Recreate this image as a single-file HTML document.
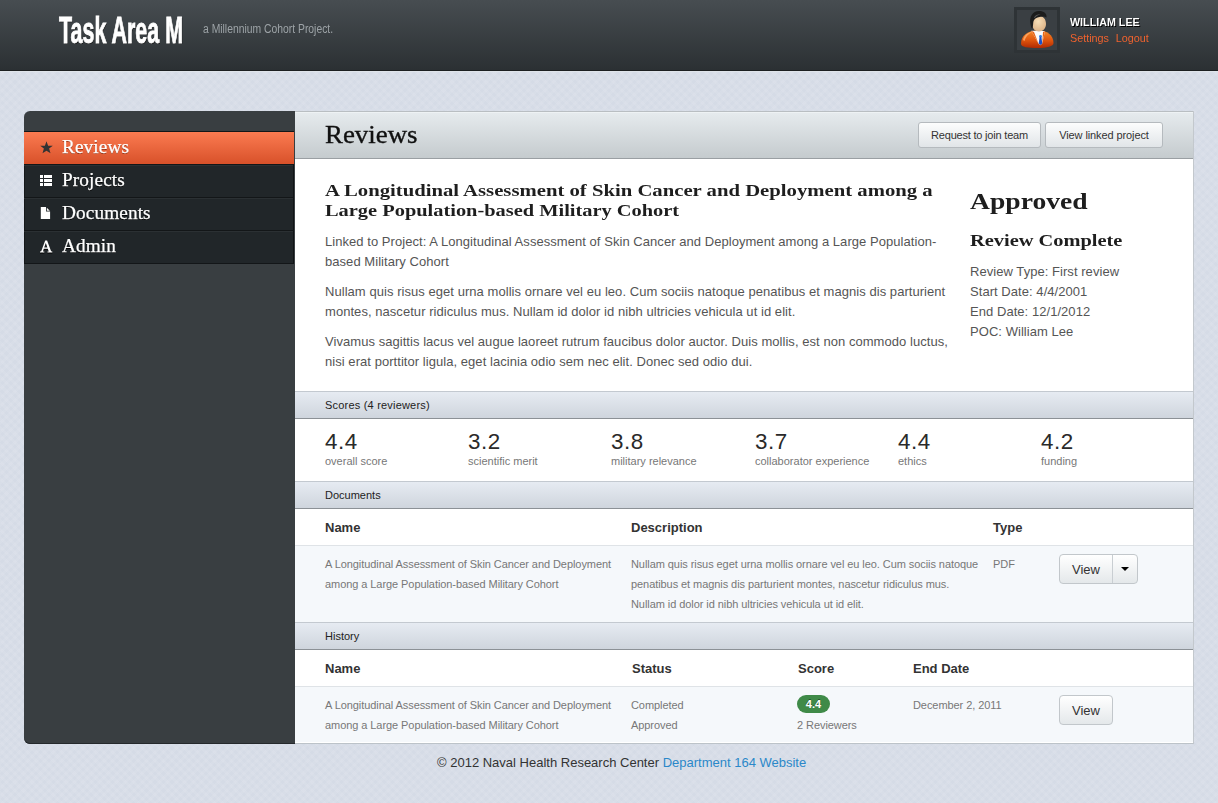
<!DOCTYPE html>
<html><head><meta charset="utf-8">
<style>
*{margin:0;padding:0;box-sizing:border-box}
html,body{width:1218px;height:803px;overflow:hidden}
body{font-family:"Liberation Sans",sans-serif;background-color:#d5dbe6;
background-image:repeating-linear-gradient(45deg,rgba(255,255,255,.07) 0 3px,rgba(255,255,255,0) 3px 6px),repeating-linear-gradient(-45deg,rgba(255,255,255,.07) 0 3px,rgba(255,255,255,0) 3px 6px);
position:relative}
.a{position:absolute;white-space:nowrap}
#hdr{left:0;top:0;width:1218px;height:71px;background:linear-gradient(#474d51,#2b3033);border-bottom:1px solid #1c1f21;box-shadow:0 1px 0 #dfe4ea}
#logo{left:59px;top:9px;font:bold 37px/44px "Liberation Sans",sans-serif;color:#fff;transform-origin:0 0;transform:scaleX(.58);-webkit-text-stroke:.9px #fff;text-shadow:1px 1px 0 #111}
#tag{left:203px;top:22px;font-size:12px;line-height:14px;color:#9da3a7;transform-origin:0 0;transform:scaleX(.863)}
#avatar{left:1014px;top:7px;width:46px;height:46px;background:#3a3f43;border:3px solid #2e3336}
#uname{left:1070px;top:15px;font:bold 11px/14px "Liberation Sans",sans-serif;color:#fff;text-shadow:1px 1px 0 #000;transform-origin:0 0;transform:scaleX(.975)}
#ulinks{left:1070px;top:31px;font-size:11px;line-height:14px;color:#f0622e;transform-origin:0 0;transform:scaleX(.98)}
#side{left:24px;top:111px;width:271px;height:633px;background:#393e41;border-radius:6px 0 0 6px;overflow:hidden;box-shadow:inset 0 -1px 0 #25292c}
.nav{position:absolute;left:0;width:270px;height:33px;background:#212629;border-top:1px solid #131618;border-right:1px solid #101315;box-shadow:inset 0 1px 0 #2b3033,inset 1px 0 0 #15181a;color:#fff;font:18px/31px "Liberation Serif",serif;letter-spacing:.1px;padding-left:38px;text-shadow:0 1px 0 #000}
.nav .ic{position:absolute;left:16px;top:10px;width:12px;height:12px}
.nt{display:inline-block;transform-origin:0 0;transform:scaleX(1.07);-webkit-text-stroke:.25px #fff}
.nav.on{border-right:0;background:linear-gradient(#fb7b51,#d8512a);box-shadow:none;text-shadow:0 1px 0 #8a3318}
#main{left:295px;top:111px;width:899px;height:633px;background:#fff;border-right:1px solid #c3c8cd;border-bottom:1px solid #bcc3c9;overflow:hidden}
#ph{left:0;top:0;width:898px;height:48px;background:linear-gradient(#e6ebee,#c5cbce);border-top:1px solid #b9bec2;border-bottom:1px solid #9a9fa3;box-shadow:inset 0 1px 0 #eef2f4}
.btn{position:absolute;height:26px;border:1px solid #b5babe;border-radius:3px;background:linear-gradient(#fcfdfd,#e1e5e8);font-size:11px;line-height:24px;color:#333;text-align:center;letter-spacing:-.1px}
.slab{font-family:"Liberation Serif",serif;font-weight:bold;color:#1e1e1e;transform-origin:0 0;transform:scaleX(1.2)}
.p{font-size:13px;line-height:20px;color:#555;letter-spacing:.05px}
.bar{position:absolute;left:0;width:898px;height:28px;background:linear-gradient(#e6ebf2,#cfd5dd);border-top:1px solid #c3c9d0;border-bottom:1px solid #8c9196;font-size:11px;line-height:26px;color:#222;padding-left:30px}
.sn{font:22.4px/24px "Liberation Sans",sans-serif;color:#2a2a2a;letter-spacing:.5px}
.sl{font-size:11px;line-height:14px;color:#777;margin-top:0}
.th{font:bold 13px/16px "Liberation Sans",sans-serif;color:#333}
.td{font-size:11px;line-height:20px;color:#777;letter-spacing:-.07px}
.row{position:absolute;left:0;width:898px;background:#f5f8fb;border-top:1px solid #dfe3e7}
.vbtn{position:absolute;height:30px;border:1px solid #c2c7cb;border-radius:4px;background:linear-gradient(#ffffff,#e4e8ea);font-size:13px;line-height:30px;color:#333}
#foot{left:437px;top:755px;font-size:13px;line-height:16px;color:#333}
#foot span{color:#2b88c9}
</style></head><body>
<div id="hdr" class="a"></div>
<div id="logo" class="a">Task Area M</div>
<div id="tag" class="a">a Millennium Cohort Project.</div>
<div id="avatar" class="a">
<svg width="40" height="40" viewBox="0 0 40 40" style="position:absolute;left:0;top:0">
<defs><linearGradient id="og" x1="0" y1="0" x2="0" y2="1"><stop offset="0" stop-color="#f58a2a"/><stop offset=".55" stop-color="#e0560e"/><stop offset="1" stop-color="#b02a02"/></linearGradient>
<radialGradient id="sk" cx=".45" cy=".35" r=".7"><stop offset="0" stop-color="#f8dfb8"/><stop offset="1" stop-color="#dcb083"/></radialGradient></defs>
<path d="M4 34 C4 25 11 20.5 21 20.5 C30 20.5 36.5 25 36.5 33 C36.5 36.5 30 38 20.5 38 C11 38 4 37 4 34 Z" fill="url(#og)"/>
<path d="M6 30 C7 25 11 22.5 15 22 C11 24 8.5 27 7.5 31 Z" fill="#ffb070" opacity=".8"/>
<path d="M14.3 20.8 L28 21 L25.2 33.5 L23.5 35.2 L21.5 33.5 Z" fill="#fbfbfb"/>
<path d="M14.3 20.8 L21.5 33.5 L17 22 Z M28 21 L25.2 33.5 L26 22 Z" fill="#e8661a"/>
<circle cx="23.5" cy="26.3" r="1.4" fill="#2a7ae0"/>
<path d="M22.6 27 L24.4 27 L25.3 33.5 L23.5 35 L21.7 33.5 Z" fill="#1a50c8"/>
<path d="M15 14 C14.5 8 17.5 6 21.5 6 C26.5 6 29 9 29 14 C29 18.5 26 21.5 22 21.5 C18 21.5 15.3 18.5 15 14 Z" fill="url(#sk)"/>
<path d="M13.5 14 C12 7 15.5 1 22 1 C27 1 30 3.5 29.5 7.5 C27.5 6 24 6.5 20.5 7.5 C18 8.2 16.3 10 16.2 13 C16.1 16 15.5 19 15 18.5 C14.2 17.5 13.8 16 13.5 14 Z" fill="#1c1c1c"/>
<path d="M17 7.5 C18.5 5 21 4 23.5 4.2 C21 5 19 6 17.8 8 Z" fill="#777" opacity=".7"/>
</svg></div>
<div id="uname" class="a">WILLIAM LEE</div>
<div id="ulinks" class="a">Settings<span style="display:inline-block;width:7px"></span>Logout</div>

<div id="side" class="a">
  <div class="nav on" style="top:20px"><svg class="ic" viewBox="0 0 12 12" style="left:16px;top:9px;width:13px;height:13px"><path d="M6 0.3 L7.5 4.3 L11.8 4.4 L8.4 7 L9.7 11.4 L6 8.9 L2.3 11.4 L3.6 7 L0.2 4.4 L4.5 4.3 Z" fill="#333"/></svg><span class="nt">Reviews</span></div>
  <div class="nav" style="top:53px"><svg class="ic" viewBox="0 0 12 12" style="top:10px"><g fill="#fff"><rect x="0" y="0" width="3" height="3"/><rect x="4" y="0" width="8" height="3"/><rect x="0" y="4" width="3" height="3"/><rect x="4" y="4" width="8" height="3"/><rect x="0" y="8" width="3" height="3"/><rect x="4" y="8" width="8" height="3"/></g></svg><span class="nt">Projects</span></div>
  <div class="nav" style="top:86px"><svg class="ic" viewBox="0 0 12 12" style="top:9px"><path d="M0.8 0 H6 V4.6 H10.1 V12 H0.8 Z" fill="#fff"/><path d="M6.8 0.8 L6.8 3.8 L9.8 3.8 Z" fill="#fff"/></svg><span class="nt">Documents</span></div>
  <div class="nav" style="top:119px;height:34px;border-bottom:1px solid #131618"><svg viewBox="0 0 13 13" style="position:absolute;left:16px;top:8.6px;width:13px;height:13px;filter:drop-shadow(0 1px 0 #000)"><path fill-rule="evenodd" fill="#fff" d="M5.2 0.6 L7.1 0.6 L11.1 11.3 L12.3 11.6 L12.3 12.4 L7.5 12.4 L7.5 11.6 L8.7 11.4 L7.8 8.8 L3.8 8.8 L3.0 11.4 L4.3 11.6 L4.3 12.4 L0.0 12.4 L0.0 11.6 L1.2 11.3 Z M4.25 7.4 L7.35 7.4 L5.8 3.0 Z"/></svg><span class="nt">Admin</span></div>
</div>

<div id="main" class="a">
  <div id="ph" class="a"><div class="a" style="left:30px;top:8px;font:25px/30px 'Liberation Serif',serif;color:#111;-webkit-text-stroke:.35px #111;transform-origin:0 0;transform:scaleX(1.075)">Reviews</div>
    <div class="btn" style="left:623px;top:10px;width:123px;letter-spacing:-.2px">Request to join team</div>
    <div class="btn" style="left:750px;top:10px;width:118px">View linked project</div>
  </div>
  <div class="a slab" style="left:30px;top:70px;font-size:17px;line-height:20px;transform:scaleX(1.218)">A Longitudinal Assessment of Skin Cancer and Deployment among a</div>
  <div class="a slab" style="left:30px;top:90px;font-size:17px;line-height:20px">Large Population-based Military Cohort</div>
  <div class="a p" style="left:30px;top:121px">Linked to Project: A Longitudinal Assessment of Skin Cancer and Deployment among a Large Population-<br>based Military Cohort</div>
  <div class="a p" style="left:30px;top:171px">Nullam quis risus eget urna mollis ornare vel eu leo. Cum sociis natoque penatibus et magnis dis parturient<br>montes, nascetur ridiculus mus. Nullam id dolor id nibh ultricies vehicula ut id elit.</div>
  <div class="a p" style="left:30px;top:221px">Vivamus sagittis lacus vel augue laoreet rutrum faucibus dolor auctor. Duis mollis, est non commodo luctus,<br>nisi erat porttitor ligula, eget lacinia odio sem nec elit. Donec sed odio dui.</div>

  <div class="a slab" style="left:675px;top:76px;font-size:23px;line-height:30px">Approved</div>
  <div class="a slab" style="left:675px;top:119px;font-size:17px;line-height:22px">Review Complete</div>
  <div class="a p" style="left:675px;top:151px">Review Type: First review<br>Start Date: 4/4/2001<br>End Date: 12/1/2012<br>POC: William Lee</div>

  <div class="bar" style="top:280px;letter-spacing:.2px">Scores (4 reviewers)</div>
  <div class="a" style="left:30px;top:319px"><div class="sn">4.4</div><div class="sl">overall score</div></div>
  <div class="a" style="left:173px;top:319px"><div class="sn">3.2</div><div class="sl">scientific merit</div></div>
  <div class="a" style="left:316px;top:319px"><div class="sn">3.8</div><div class="sl">military relevance</div></div>
  <div class="a" style="left:460px;top:319px"><div class="sn">3.7</div><div class="sl">collaborator experience</div></div>
  <div class="a" style="left:603px;top:319px"><div class="sn">4.4</div><div class="sl">ethics</div></div>
  <div class="a" style="left:746px;top:319px"><div class="sn">4.2</div><div class="sl">funding</div></div>

  <div class="bar" style="top:370px">Documents</div>
  <div class="a th" style="left:30px;top:409px">Name</div>
  <div class="a th" style="left:336px;top:409px">Description</div>
  <div class="a th" style="left:698px;top:409px">Type</div>
  <div class="row" style="top:434px;height:77px"></div>
  <div class="a td" style="left:30px;top:443px">A Longitudinal Assessment of Skin Cancer and Deployment<br>among a Large Population-based Military Cohort</div>
  <div class="a td" style="left:336px;top:443px">Nullam quis risus eget urna mollis ornare vel eu leo. Cum sociis natoque<br>penatibus et magnis dis parturient montes, nascetur ridiculus mus.<br>Nullam id dolor id nibh ultricies vehicula ut id elit.</div>
  <div class="a td" style="left:698px;top:443px">PDF</div>
  <div class="vbtn" style="left:764px;top:443px;width:79px"><span style="position:absolute;left:12px;top:0">View</span><span style="position:absolute;left:52px;top:0;width:1px;height:28px;background:#c9ced2"></span><span style="position:absolute;left:61px;top:12px;width:0;height:0;border-left:4px solid transparent;border-right:4px solid transparent;border-top:4px solid #000"></span></div>

  <div class="bar" style="top:511px">History</div>
  <div class="a th" style="left:30px;top:550px">Name</div>
  <div class="a th" style="left:337px;top:550px">Status</div>
  <div class="a th" style="left:503px;top:550px">Score</div>
  <div class="a th" style="left:618px;top:550px">End Date</div>
  <div class="row" style="top:575px;height:56px"></div>
  <div class="a td" style="left:30px;top:584px">A Longitudinal Assessment of Skin Cancer and Deployment<br>among a Large Population-based Military Cohort</div>
  <div class="a td" style="left:336px;top:584px">Completed<br>Approved</div>
  <div class="a" style="left:502px;top:584px;width:33px;height:18px;border-radius:9px;background:#3f8a48;color:#fff;font:bold 11px/18px 'Liberation Sans',sans-serif;text-align:center;text-shadow:0 -1px 0 #245a2b">4.4</div>
  <div class="a td" style="left:502px;top:604px">2 Reviewers</div>
  <div class="a td" style="left:618px;top:584px">December 2, 2011</div>
  <div class="vbtn" style="left:764px;top:584px;width:54px;text-align:center">View</div>
</div>

<div id="foot" class="a">© 2012 Naval Health Research Center <span>Department 164 Website</span></div>
</body></html>
